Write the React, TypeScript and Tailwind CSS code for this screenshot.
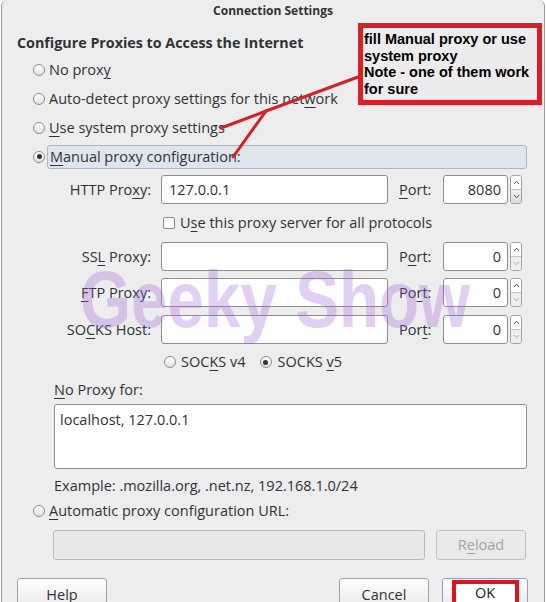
import React from 'react';

const Radio = ({ checked }: { checked?: boolean }) => (
  <span className="w-[12px] h-[12px] rounded-full border border-[#8c8c8c] bg-gradient-to-b from-white to-[#e2e2e2] flex items-center justify-center shrink-0">
    {checked && <span className="w-[5px] h-[5px] rounded-full bg-[#2e3436]" />}
  </span>
);

const Chevron = ({ up, dim }: { up?: boolean; dim?: boolean }) => (
  <svg width="7" height="5" viewBox="0 0 7 5" className={dim ? 'opacity-40' : ''}>
    <path d={up ? 'M1 4 L3.5 1.2 L6 4' : 'M1 1 L3.5 3.8 L6 1'} fill="none" stroke="#555" strokeWidth="1" />
  </svg>
);

const Spin = ({ downOff }: { downOff?: boolean }) => (
  <div className="ml-[2px] w-[12px] h-[29px] flex flex-col border border-[#a3a3a3] rounded-[3px] overflow-hidden">
    <div className="flex-1 bg-white flex items-center justify-center border-b border-[#c4c4c4]">
      <Chevron up />
    </div>
    <div
      className={
        downOff
          ? 'flex-1 bg-[#eeeeee] flex items-center justify-center'
          : 'flex-1 bg-gradient-to-b from-[#f2f2f2] to-[#d9d9d9] flex items-center justify-center'
      }
    >
      <Chevron dim={downOff} />
    </div>
  </div>
);

interface RowProps {
  label: React.ReactNode;
  value?: string;
  portLabel: React.ReactNode;
  port: string;
  downOff?: boolean;
  className?: string;
}

const ProxyRow = ({ label, value, portLabel, port, downOff, className }: RowProps) => (
  <div className={`flex items-center h-[29px] ${className ?? ''}`}>
    <div className="w-[134px] text-right whitespace-nowrap">{label}</div>
    <div className="ml-[10px] w-[227px] h-[29px] bg-white border border-[#8e8e8e] rounded-[3px] flex items-center px-[7px]">
      {value}
    </div>
    <div className="ml-[11px] w-[44px]">{portLabel}</div>
    <div className="w-[65px] h-[29px] bg-white border border-[#8e8e8e] rounded-[3px] flex items-center justify-end px-[6px]">
      {port}
    </div>
    <Spin downOff={downOff} />
  </div>
);

const U = ({ children }: { children: React.ReactNode }) => (
  <span className="underline underline-offset-[3px] decoration-1">{children}</span>
);

export default function App() {
  return (
    <div className="relative w-[546px] h-[602px] bg-white overflow-hidden font-['Open_Sans',sans-serif] text-[14.5px] text-[#2e3436]">
      <div className="ml-[1px] w-[544px] h-[602px] bg-[#ededed] border-x border-[#9c9c9c] rounded-t-[6px] overflow-hidden">
        <div className="h-[21px] flex items-center justify-center text-[12px] font-bold text-[#2e3436]">
          Connection Settings
        </div>

        <div className="pl-[15px] mt-[10px] h-[24px] flex items-center font-bold text-[14.3px]">
          Configure Proxies to Access the Internet
        </div>

        <div className="pl-[31px]">
          <div className="h-[29px] flex items-center gap-[4px]">
            <Radio />
            <span>No prox<U>y</U></span>
          </div>
          <div className="h-[29px] flex items-center gap-[4px]">
            <Radio />
            <span>Auto-detect proxy settings for this net<U>w</U>ork</span>
          </div>
          <div className="h-[29px] flex items-center gap-[4px]">
            <Radio />
            <span><U>U</U>se system proxy settings</span>
          </div>
          <div className="h-[29px] flex items-center gap-[2px]">
            <Radio checked />
            <div className="w-[480px] h-[24px] flex items-center pl-[2px] bg-[#dfe5ec] border border-[#a9b7c6] rounded-[3px]">
              <span><U>M</U>anual proxy configuration:</span>
            </div>
          </div>
        </div>

        <div className="pl-[15px] mt-[4px]">
          <ProxyRow
            label={<span>HTTP Pro<U>x</U>y:</span>}
            value="127.0.0.1"
            portLabel={<span><U>P</U>ort:</span>}
            port="8080"
          />
          <div className="h-[38px] flex items-center pl-[146px] gap-[5px]">
            <span className="w-[12px] h-[12px] bg-white border border-[#8c8c8c] rounded-[2px]" />
            <span>U<U>s</U>e this proxy server for all protocols</span>
          </div>
          <ProxyRow
            label={<span>SS<U>L</U> Proxy:</span>}
            portLabel={<span>P<U>o</U>rt:</span>}
            port="0"
            downOff
          />
          <ProxyRow
            className="mt-[7px]"
            label={<span><U>F</U>TP Proxy:</span>}
            portLabel={<span>Po<U>r</U>t:</span>}
            port="0"
            downOff
          />
          <ProxyRow
            className="mt-[8px]"
            label={<span>SO<U>C</U>KS Host:</span>}
            portLabel={<span>Por<U>t</U>:</span>}
            port="0"
            downOff
          />
          <div className="h-[36px] flex items-center pl-[147px]">
            <Radio />
            <span className="ml-[5px]">SOC<U>K</U>S v4</span>
            <span className="ml-[14px]"><Radio checked /></span>
            <span className="ml-[6px]">SOCKS <U>v</U>5</span>
          </div>
        </div>

        <div className="pl-[52px]">
          <div className="h-[20px] flex items-center">
            <span><U>N</U>o Proxy for:</span>
          </div>
          <div className="mt-[4px] w-[473px] h-[65px] bg-white border border-[#8e8e8e] rounded-[3px] px-[5px] py-[5px] leading-[20px]">
            localhost, 127.0.0.1
          </div>
          <div className="h-[33px] flex items-center">
            Example: .mozilla.org, .net.nz, 192.168.1.0/24
          </div>
        </div>

        <div className="pl-[31px] h-[18px] flex items-center gap-[4px]">
          <Radio />
          <span><U>A</U>utomatic proxy configuration URL:</span>
        </div>

        <div className="pl-[51px] mt-[10px] flex items-center">
          <div className="w-[372px] h-[30px] bg-[#e8e8e8] border border-[#b9b9b9] rounded-[3px]" />
          <div className="ml-[11px] w-[90px] h-[30px] bg-[#e9e9e9] border border-[#c2c2c2] rounded-[3px] flex items-center justify-center text-[#a4a4a4]">
            <span>R<U>e</U>load</span>
          </div>
        </div>

        <div className="pl-[15px] mt-[18px] flex items-start">
          <div className="w-[90px] h-[34px] bg-gradient-to-b from-white to-[#e6e6e6] border border-[#a2a2a2] rounded-[3px] flex items-center justify-center">
            <span><U>H</U>elp</span>
          </div>
          <div className="ml-[232px] w-[90px] h-[34px] bg-gradient-to-b from-white to-[#e6e6e6] border border-[#a2a2a2] rounded-[3px] flex items-center justify-center">
            Cancel
          </div>
          <div className="ml-[13px] w-[86px] h-[34px] bg-gradient-to-b from-white to-[#e6e6e6] border border-[#8ea6c4] rounded-[3px] flex justify-center pt-[1px]">
            <div className="w-[67px] h-[26px] bg-white border-[4px] border-[#e0141e] flex items-center justify-center text-[#222]">
              OK
            </div>
          </div>
        </div>
      </div>

      {/* annotation */}
      <div className="absolute left-[358px] top-[23px] w-[184px] h-[82px] border-[5px] border-[#dc1f26] bg-[#ececec] px-[1px] pt-[3px] font-['Liberation_Sans',Arial,sans-serif] font-bold text-[14.5px] leading-[16.5px] text-black">
        fill Manual proxy or use
        <br />
        system proxy
        <br />
        Note - one of them work
        <br />
        for sure
      </div>
      <svg className="absolute inset-0 pointer-events-none" width="546" height="602">
        <g stroke="#d42027" strokeWidth="3" strokeLinecap="round" fill="none">
          <line x1="358" y1="77" x2="266" y2="111" />
          <line x1="266" y1="111" x2="221" y2="128" />
          <line x1="266" y1="111" x2="233" y2="157" />
        </g>
      </svg>

      {/* watermark */}
      <div className="absolute left-[80px] top-[260px] pointer-events-none origin-left scale-x-[0.82] font-['Liberation_Sans',Arial,sans-serif] font-bold text-[80px] leading-none text-[#a064dc] opacity-30 whitespace-nowrap">
        Geeky Show
      </div>
    </div>
  );
}
